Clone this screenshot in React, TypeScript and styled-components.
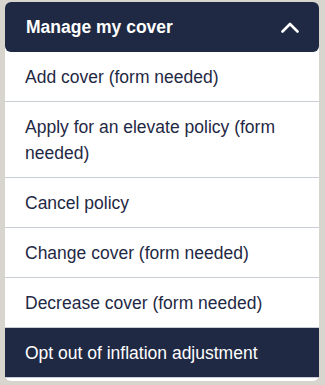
import styled, { createGlobalStyle } from "styled-components";

const GlobalStyle = createGlobalStyle`
  html, body {
    margin: 0;
    background: #d8d4ce;
  }

  body {
    padding: 2px 6px 5px 5px;
    font-family: "Liberation Sans", Arial, sans-serif;
  }
`;

const items = [
  "Add cover (form needed)",
  "Apply for an elevate policy (form needed)",
  "Cancel policy",
  "Change cover (form needed)",
  "Decrease cover (form needed)",
  "Opt out of inflation adjustment",
];

function App() {
  return (
    <>
      <GlobalStyle />
      <Panel>
        <Header type="button">
          <Title>Manage my cover</Title>
          <Chevron width="20" height="12" viewBox="0 0 20 12" fill="none">
            <path
              d="M2.5 10.5 L10 3 L17.5 10.5"
              stroke="#fff"
              strokeWidth="2.6"
              strokeLinecap="round"
              strokeLinejoin="round"
            />
          </Chevron>
        </Header>

        <List>
          {items.map((label, i) => (
            <Item key={label} $active={i === items.length - 1}>
              {label}
            </Item>
          ))}
        </List>
      </Panel>
    </>
  );
}

const Panel = styled.div`
  width: 314px;
  background: #fff;
  border-radius: 6px;
`;

const Header = styled.button`
  display: flex;
  align-items: center;
  justify-content: space-between;
  width: 100%;
  height: 50px;
  padding: 0 19px 0 21px;
  border: none;
  border-radius: 6px;
  background: #1f2944;
  color: #fff;
  font-family: inherit;
  cursor: pointer;
`;

const Title = styled.span`
  font-size: 17.5px;
  font-weight: 700;
`;

const Chevron = styled.svg`
  display: block;
  margin-top: -1px;
`;

const List = styled.ul`
  margin: 0;
  padding: 0 0 3px;
  list-style: none;
  border-radius: 0 0 6px 6px;
`;

const Item = styled.li<{ $active?: boolean }>`
  padding: 12px 20px 11px;
  border-bottom: 1px solid #c9cdd6;
  font-size: 17.5px;
  line-height: 26px;
  color: ${(p) => (p.$active ? "#fff" : "#1f2944")};
  background: ${(p) => (p.$active ? "#1f2944" : "transparent")};
`;

export default App;
